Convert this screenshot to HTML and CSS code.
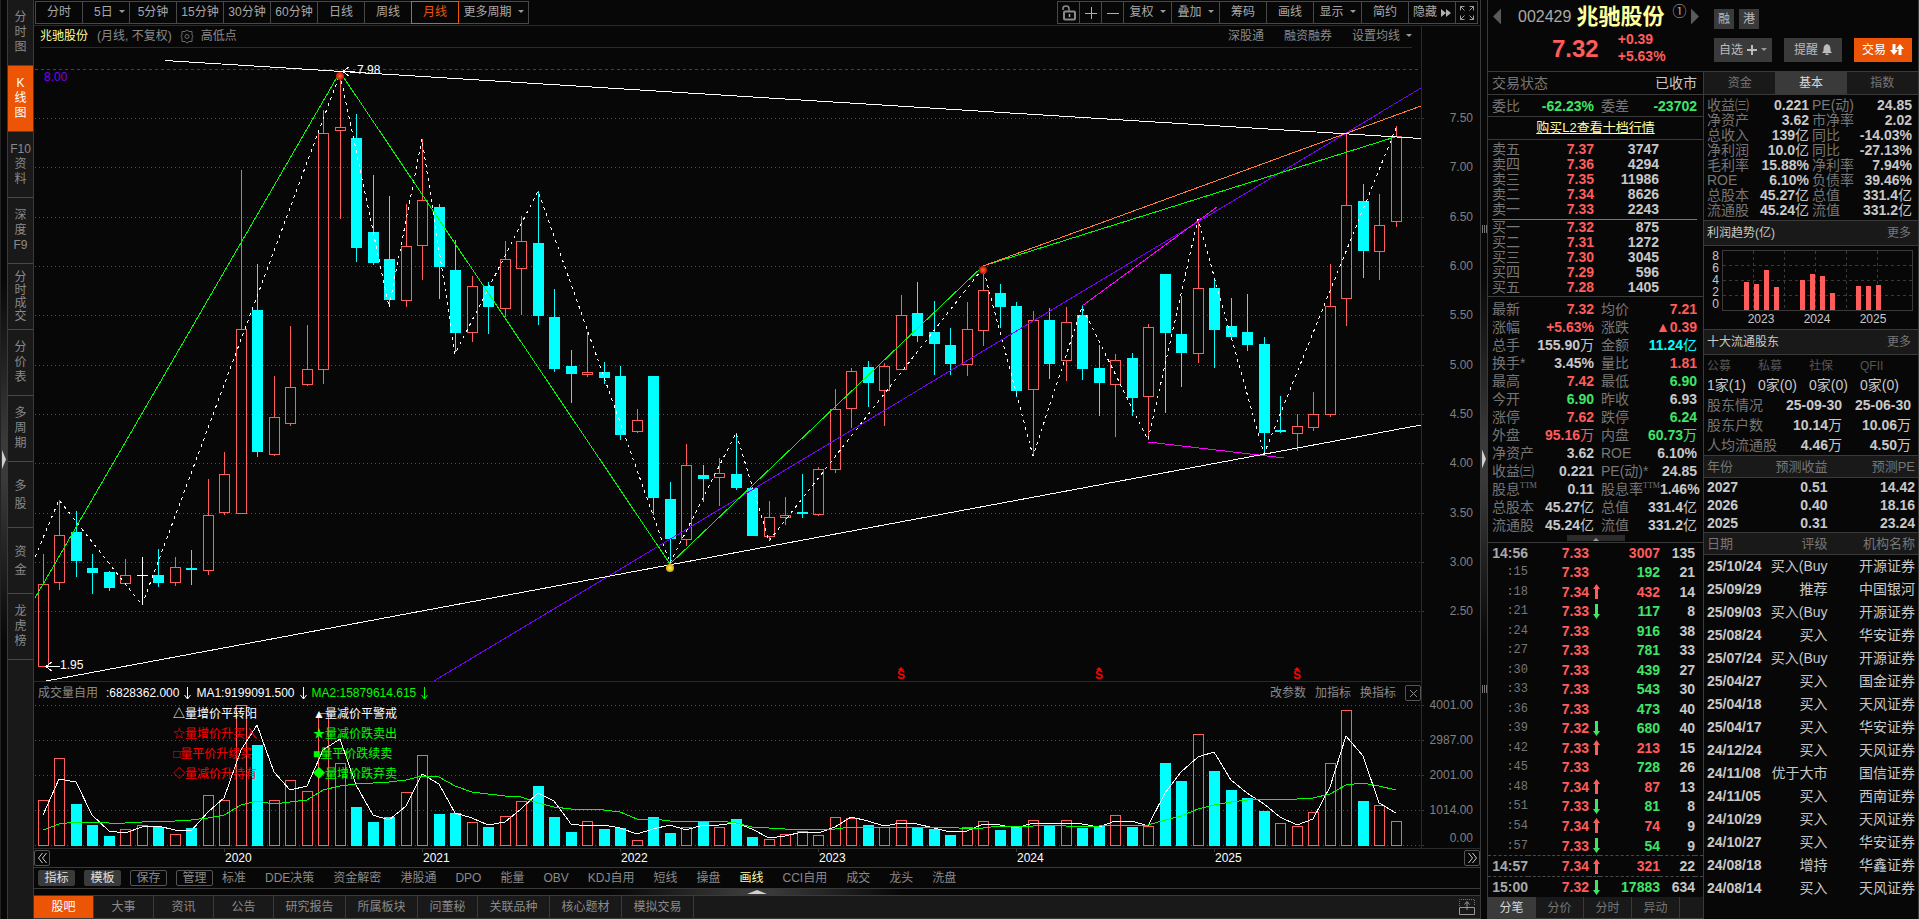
FILE: index.html
```html
<!doctype html>
<html lang="zh-CN">
  <head>
    <meta charset="UTF-8" />
    <meta name="viewport" content="width=device-width, initial-scale=1">
    <title>兆驰股份 002429</title>
    <link rel="stylesheet" href="styles.css">
    <script src="script.js" defer></script>
  </head>
  <body>
    <div class="strip strip-left"><button class="fold" aria-label="展开"></button></div>

    <nav class="side">
      <a href="#">分<br>时<br>图</a>
      <a href="#" class="on">K<br>线<br>图</a>
      <a href="#">F10<br>资<br>料</a>
      <a href="#">深<br>度<br>F9</a>
      <a href="#" class="tight">分<br>时<br>成<br>交</a>
      <a href="#">分<br>价<br>表</a>
      <a href="#">多<br>周<br>期</a>
      <a href="#" class="loose">多<br>股</a>
      <a href="#" class="loose">资<br>金</a>
      <a href="#">龙<br>虎<br>榜</a>
    </nav>

    <main class="chart">
      <div class="toolbar">
        <div class="group">
          <button>分时</button><button>&nbsp;&nbsp;5日<i class="caret"></i></button><button>5分钟</button><button>15分钟</button><button>30分钟</button><button>60分钟</button><button>日线</button><button>周线</button><button class="on">月线</button><button class="wide">更多周期<i class="caret"></i></button>
        </div>
        <div class="group">
          <button class="icon" aria-label="锁定"><svg width="16" height="18" viewBox="0 0 16 18"><path d="M2 6V4.500Q2 2 5 2Q8 2 8 4.500V7" fill="none" stroke="#8a8a8a" stroke-width="1.500"/><rect x="3" y="7.500" width="11" height="8" rx="1" fill="none" stroke="#8a8a8a" stroke-width="2"/><path d="M8.500 10v3" stroke="#aaa" stroke-width="1.500"/></svg></button>
          <button class="icon" aria-label="放大"><svg width="12" height="12"><path d="M0 6.500h12M6.500 0v12" stroke="#b0b0b0"/></svg></button>
          <button class="icon" aria-label="缩小"><svg width="12" height="12"><path d="M0 6.500h12" stroke="#b0b0b0"/></svg></button>
          <button class="menu">复权<i class="caret"></i></button><button class="menu">叠加<i class="caret"></i></button><button>筹码</button><button>画线</button><button class="menu">显示<i class="caret"></i></button><button>简约</button>
          <button>隐藏<svg class="ff" width="10" height="8"><path d="M0 0l5 4-5 4zM5 0l5 4-5 4z" fill="#b0b0b0"/></svg></button>
          <button class="icon" aria-label="全屏"><svg width="14" height="14" viewBox="0 0 14 14"><path d="M.5 4.500v-4h4M.5.5l4 4M9.500.5h4v4M13.500.5l-4 4M.5 9.500v4h4M.5 13.500l4-4M13.500 9.500v4h-4M13.500 13.500l-4-4" fill="none" stroke="#a0a0a0"/></svg></button>
        </div>
      </div>

      <div class="info">
        <div class="info-in">
          <b class="yellow">兆驰股份</b>
          <span class="period">(月线, 不复权)</span>
          <svg width="14" height="15" viewBox="0 0 14 15"><path d="M7 1l2 1.500h3v3.500l1 1.500-1 1.500v3.500h-3L7 14l-2-1.500H2V9L1 7.500 2 6V2.500h3z" fill="none" stroke="#6a6a6a"/><circle cx="7" cy="7.500" r="2" fill="none" stroke="#6a6a6a"/></svg>
          <span>高低点</span>
          <a href="#" class="push">深股通</a>
          <a href="#">融资融券</a>
          <a href="#">设置均线<i class="caret"></i></a>
        </div>
      </div>

      <svg id="price" viewBox="34 48 1446 633" preserveAspectRatio="none"></svg>

      <div class="vol-head">
        <span class="name">成交量自用</span>
        <span>:6828362.000</span>
        <svg width="7" height="13"><path d="M3.500 0v12M.5 8l3 4 3-4" fill="none" stroke="#fff"/></svg>
        <span>MA1:9199091.500</span>
        <svg width="7" height="13"><path d="M3.500 0v12M.5 8l3 4 3-4" fill="none" stroke="#fff"/></svg>
        <span class="lime">MA2:15879614.615</span>
        <svg width="7" height="13"><path d="M3.500 0v12M.5 8l3 4 3-4" fill="none" stroke="#0f0"/></svg>
        <a href="#" class="push">改参数</a><a href="#">加指标</a><a href="#">换指标</a>
        <button class="close" aria-label="关闭"><svg width="7" height="7"><path d="M0 0l7 7M7 0l-7 7" stroke="#888"/></svg></button>
      </div>
      <svg id="volume" viewBox="34 704 1446 144" preserveAspectRatio="none"></svg>

      <div class="years">
        <button aria-label="向前"><svg width="9" height="10"><path d="M4.500 0L.5 5l4 5M8.500 0l-4 5 4 5" fill="none" stroke="#ccc"/></svg></button>
        <svg id="years" viewBox="50 849 1414 18" preserveAspectRatio="none"></svg>
        <button aria-label="向后"><svg width="9" height="10"><path d="M.5 0l4 5-4 5M4.500 0l4 5-4 5" fill="none" stroke="#ccc"/></svg></button>
      </div>

      <div class="indicators">
        <button class="fill">指标</button><button class="fill">模板</button><button>保存</button><button>管理</button>
        <nav>
          <a href="#">标准</a><a href="#">DDE决策</a><a href="#">资金解密</a><a href="#">港股通</a><a href="#">DPO</a><a href="#">能量</a><a href="#">OBV</a><a href="#">KDJ自用</a><a href="#">短线</a><a href="#">操盘</a><a href="#" class="yellow">画线</a><a href="#">CCI自用</a><a href="#">成交</a><a href="#">龙头</a><a href="#">洗盘</a>
        </nav>
      </div>
      <div class="hsplit"><i></i></div>

      <nav class="bottom">
        <a href="#" class="on">股吧</a><a href="#">大事</a><a href="#">资讯</a><a href="#">公告</a><a href="#" class="w">研究报告</a><a href="#" class="w">所属板块</a><a href="#">问董秘</a><a href="#" class="w">关联品种</a><a href="#" class="w">核心题材</a><a href="#" class="w">模拟交易</a>
        <button aria-label="弹出"><svg width="16" height="17"><path d="M.5 8.500h15v7H.5z" fill="none" stroke="#999"/><path d="M8 11V3M5.500 5.500L8 2.500l2.500 3" fill="none" stroke="#999"/><path d="M.5 7V.5h15V7" fill="none" stroke="#777" stroke-dasharray="1 1"/></svg></button>
      </nav>
    </main>

    <div class="strip strip-mid"><i class="grip"></i><button class="fold" aria-label="收起"></button><i class="grip"></i></div>

    <aside class="quote">
      <header>
        <div class="title">
          <button class="prev" aria-label="上一只"></button>
          <span class="code">002429</span>
          <h1>兆驰股份</h1>
          <sup>①</sup>
          <button class="next" aria-label="下一只"></button>
        </div>
        <div class="now up">
          <strong>7.32</strong>
          <div><b>+0.39</b><b>+5.63%</b></div>
        </div>
        <div class="actions">
          <div><button class="tag">融</button><button class="tag">港</button></div>
          <div>
            <button>自选<svg width="10" height="10"><path d="M0 5h10M5 0v10" stroke="#bbb" stroke-width="2"/></svg><i class="caret"></i></button>
            <button>提醒<svg width="10" height="11"><path d="M5 0Q8.500 1 8.500 5V7L10 9H0L1.500 7V5Q1.500 1 5 0zM3.500 9.500h3V11h-3z" fill="#bbb"/></svg></button>
            <button class="trade">交易<svg width="14" height="11"><path d="M4 0v7M10 11V4" stroke="#fff" stroke-width="3"/><path d="M0 6h8l-4 5zM6 5h8L10 0z" fill="#fff"/></svg></button>
          </div>
        </div>
      </header>

      <section class="col left">
        <div class="status"><span>交易状态</span><span class="val">已收市</span></div>
        <dl class="pairs ratio">
          <div><dt>委比</dt><dd class="down-c">-62.23%</dd></div>
          <div><dt>委差</dt><dd class="down-c">-23702</dd></div>
        </dl>
        <p class="l2"><a href="#">购买L2查看十档行情</a></p>
        <table class="book" id="asks"></table>
        <table class="book bids" id="bids"></table>
        <dl class="pairs detail" id="detail"></dl>
        <button class="more" aria-label="收起明细"><i></i></button>
        <div class="tick-box"><table class="ticks" id="ticks"></table></div>
        <nav class="tabs"><a href="#" class="on">分笔</a><a href="#">分价</a><a href="#">分时</a><a href="#">异动</a></nav>
      </section>

      <section class="col right">
        <nav class="tabs top"><a href="#">资金</a><a href="#" class="on">基本</a><a href="#">指数</a></nav>
        <dl class="pairs basic" id="basic"></dl>
        <h2>利润趋势(亿)<a href="#">更多</a></h2>
        <svg id="profit" viewBox="1704 246 214 83" preserveAspectRatio="none"></svg>
        <h2>十大流通股东<a href="#">更多</a></h2>
        <table class="funds">
          <tr><th>公募</th><th>私募</th><th>社保</th><th>QFII</th></tr>
          <tr><td>1家(1)</td><td>0家(0)</td><td>0家(0)</td><td>0家(0)</td></tr>
        </table>
        <table class="holders">
          <tr><th>股东情况</th><td>25-09-30</td><td>25-06-30</td></tr>
          <tr><th>股东户数</th><td>10.14<s>万</s></td><td>10.06<s>万</s></td></tr>
          <tr><th>人均流通股</th><td>4.46<s>万</s></td><td>4.50<s>万</s></td></tr>
        </table>
        <table class="list forecast">
          <tr><th>年份</th><th>预测收益</th><th>预测PE</th></tr>
          <tr><td>2027</td><td>0.51</td><td>14.42</td></tr>
          <tr><td>2026</td><td>0.40</td><td>18.16</td></tr>
          <tr><td>2025</td><td>0.31</td><td>23.24</td></tr>
        </table>
        <table class="list ratings" id="ratings">
          <tr><th>日期</th><th>评级</th><th>机构名称</th></tr>
        </table>
      </section>
    </aside>
  </body>
</html>
```
FILE: styles.css
```css
* {
  box-sizing: border-box;
}
body {
  margin: 0;
  display: grid;
  grid-template-columns: 8px 26px minmax(0, 1fr) 8px 431px;
  height: 100vh;
  min-height: 919px;
  background: #070707;
  color: #8a8a8a;
  font: 12px/15px "Liberation Sans", "Noto Sans CJK SC", sans-serif;
}
a {
  color: inherit;
  text-decoration: none;
}
button {
  margin: 0;
  padding: 0;
  border: 0;
  background: none;
  color: inherit;
  font: inherit;
}
i {
  font-style: normal;
}
h1, h2, p, dl, dd {
  margin: 0;
}
table {
  border-collapse: collapse;
  table-layout: fixed;
  width: 100%;
}
th, td {
  padding: 0;
  font-weight: normal;
  text-align: right;
  white-space: nowrap;
}
.caret {
  display: inline-block;
  margin-left: 6px;
  border: 3px solid transparent;
  border-top-color: #999;
  border-bottom: 0;
  vertical-align: 3px;
}
.yellow { color: #ffffa0; }
.lime { color: #00ff00; }
.up { color: #ff5c5c; }
.down-c { color: #3fe567; }
.push { margin-left: auto; }

/* narrow bars with the fold arrow */
.strip {
  display: flex;
  flex-direction: column;
  align-items: center;
  border: solid #3a3a3a;
  border-width: 0 1px;
  background: linear-gradient(#070707 30%, #3a3a3a 48%, #3a3a3a 52%, #070707 70%);
}
.strip-left {
  justify-content: center;
  border-left-color: #222;
}
.strip-mid {
  padding: 225px 0 226px;
  justify-content: space-between;
}
.fold {
  width: 4px;
  height: 19px;
  background: #d0d0d0;
  clip-path: polygon(0 0, 100% 50%, 0 100%);
}
.grip {
  width: 5px;
  height: 8px;
  background: repeating-linear-gradient(90deg, #777 0 1px, transparent 1px 2px);
}

.side {
  background: #191919;
  border-right: 1px solid #3a3a3a;
}
.side a {
  display: flex;
  height: 66px;
  align-items: center;
  justify-content: center;
  border-bottom: 1px solid #484848;
  text-align: center;
}
.side .on {
  background: #eb5505;
  color: #fff;
}
.side .tight { line-height: 13px; }
.side .loose { line-height: 18px; }

.chart {
  display: flex;
  flex-direction: column;
  min-width: 0;
}
.toolbar {
  display: flex;
  justify-content: space-between;
  height: 26px;
  padding: 1px 3px 1px 1px;
  border-bottom: 1px solid #2a2a2a;
}
.group {
  display: flex;
  color: #a8a8a8;
}
.group button {
  width: 48px;
  height: 23px;
  margin-right: -1px;
  border: 1px solid #484848;
  white-space: nowrap;
}
.group button.icon { width: 23px; }
.group button.menu { width: 49px; }
.group button.wide { width: 71px; }
.group button svg { vertical-align: middle; }
.group .ff { margin-left: 4px; }
.group .on {
  position: relative;
  border-color: #eb5505;
  color: #eb5505;
}
.info {
  height: 22px;
  margin-right: 58px;
  border-right: 1px solid #2a2a2a;
}
.info-in {
  display: flex;
  align-items: center;
  gap: 5px;
  height: 22px;
  margin: 0 9px 0 6px;
  border-bottom: 1px solid #2a2a2a;
}
.info-in b { font-weight: normal; }
.info-in .period { margin-left: 4px; }
.info-in svg { margin: 0 2px 0 3px; }
.info-in a { margin-left: 15px; }
.info-in a.push { margin-left: auto; }
#price {
  flex: 1;
  min-height: 0;
  width: 100%;
}
.vol-head {
  display: flex;
  align-items: center;
  height: 23px;
  margin-right: 58px;
  padding-left: 4px;
  border: solid #2a2a2a;
  border-width: 1px 1px 0 0;
  color: #fff;
}
.vol-head .name {
  margin-right: 8px;
  color: #8a8a8a;
}
.vol-head a {
  margin-right: 9px;
  color: #8a8a8a;
}
.vol-head > svg { margin: 0 5px; }
.close {
  width: 16px;
  height: 16px;
  border: 1px solid #555;
  border-radius: 2px;
  line-height: 10px;
}
#volume {
  width: 100%;
  height: 144px;
  overflow: visible;
}
.years {
  display: flex;
  align-items: center;
  height: 19px;
  border-top: 1px solid #2a2a2a;
}
.years > svg {
  flex: 1;
  min-width: 0;
  height: 18px;
}
.years button {
  width: 16px;
  height: 16px;
  border: 1px solid #555;
  border-radius: 2px;
  line-height: 10px;
}
svg text {
  font-size: 12px;
}
.indicators {
  display: flex;
  align-items: center;
  gap: 9px;
  height: 21px;
  padding-left: 4px;
  border-top: 1px solid #3a3a3a;
}
.indicators button {
  width: 37px;
  height: 16px;
  border: 1px solid #555;
  border-radius: 2px;
  line-height: 13px;
}
.indicators .fill {
  background: #3a3a3a;
  border-color: #3a3a3a;
  color: #e0e0e0;
}
.indicators nav {
  display: flex;
  gap: 19px;
}
.hsplit {
  display: flex;
  justify-content: center;
  align-items: center;
  height: 7px;
  border-top: 1px solid #3a3a3a;
  background: linear-gradient(90deg, #070707 40%, #3a3a3a 49%, #3a3a3a 51%, #070707 60%);
}
.hsplit i {
  border: 10px solid transparent;
  border-width: 0 10px 4px;
  border-bottom-color: #d0d0d0;
}
.bottom {
  display: flex;
  height: 24px;
  border: solid #3a3a3a;
  border-width: 1px 0;
  background: #191919;
}
.bottom a {
  width: 60px;
  border-right: 1px solid #3a3a3a;
  line-height: 23px;
  text-align: center;
}
.bottom a.w { width: 72px; }
.bottom .on {
  background: #eb5505;
  color: #fff;
}
.bottom button {
  margin: 3px 5px 0 auto;
}

/* quote panel */
.quote {
  display: grid;
  grid-template-columns: 216px 214px;
  grid-template-rows: 72px minmax(0, 1fr);
  border-right: 1px solid #3a3a3a;
  font-size: 14px;
  color: #767676;
}
.quote header {
  grid-column: 1 / 3;
  display: grid;
  grid-template-columns: 216px 214px;
  grid-template-rows: 33px 38px;
  border-bottom: 1px solid #3a3a3a;
}
.title {
  display: flex;
  align-items: center;
  padding: 0 5px;
  color: #aaa;
}
.prev, .next {
  width: 8px;
  height: 16px;
  background: #5a5a5a;
  clip-path: polygon(100% 0, 0 50%, 100% 100%);
}
.next {
  margin-left: auto;
  clip-path: polygon(0 0, 100% 50%, 0 100%);
}
.code {
  margin: 0 5px 0 17px;
  font-size: 16px;
}
.title h1 {
  color: #ffffa0;
  font-size: 22px;
  line-height: 30px;
}
.title sup {
  align-self: flex-start;
  margin: 4px 0 0 8px;
  font-size: 14px;
}
.now {
  grid-row: 2;
  display: flex;
  align-items: center;
  gap: 19px;
  padding: 0 0 8px 64px;
}
.now strong {
  font-size: 24px;
}
.now div {
  line-height: 17px;
}
.now b {
  display: block;
}
.actions {
  grid-column: 2;
  grid-row: 1 / 3;
  padding: 9px 6px 0 10px;
  color: #bbb;
  font-size: 12px;
}
.actions div {
  display: flex;
  gap: 5px;
}
.actions div + div {
  justify-content: space-between;
  margin-top: 9px;
}
.actions button {
  width: 58px;
  height: 24px;
  background: #3a3a3a;
}
.actions svg {
  margin-left: 4px;
  vertical-align: -1px;
}
.actions .caret { margin-left: 4px; }
.actions .tag {
  width: 20px;
  height: 20px;
}
.actions .trade {
  background: #eb5505;
  color: #fff;
}

.col {
  display: flex;
  flex-direction: column;
  min-width: 0;
}
.left {
  border-right: 1px solid #3a3a3a;
}
.status {
  display: flex;
  justify-content: space-between;
  height: 23px;
  padding: 0 6px 0 4px;
  border-bottom: 1px solid #3a3a3a;
  line-height: 22px;
}
.val { color: #c8c8c8; }
.pairs {
  display: grid;
  grid-template-columns: 102px 96px;
  column-gap: 7px;
  padding-left: 4px;
  line-height: 18px;
}
.pairs div {
  display: flex;
  justify-content: space-between;
  white-space: nowrap;
}
dd {
  color: #c8c8c8;
  font-weight: bold;
}
dd.up { color: #ff5c5c; }
dd.down-c { color: #3fe567; }
dd.cyan { color: #00ffff; }
s {
  font-weight: normal;
  text-decoration: none;
}
dt sup {
  font: 8px/8px "Liberation Serif", serif;
  vertical-align: 6px;
}
.ratio {
  height: 22px;
  border-bottom: 1px solid #3a3a3a;
  line-height: 22px;
}
.l2 {
  height: 23px;
  border-bottom: 1px solid #3a3a3a;
  color: #ffffa0;
  font-size: 13px;
  line-height: 22px;
  text-align: center;
}
.l2 a { text-decoration: underline; }
.book {
  width: 205px;
  margin: 2px 5px 0 4px;
  line-height: 15px;
}
.book th {
  width: 37px;
  text-align: left;
}
.book td {
  width: 65px;
  font-weight: bold;
}
.book td:nth-child(2) { color: #ff5c5c; }
.book td:nth-child(3) { color: #c8c8c8; }
.book td:last-child { width: 38px; }
.bids {
  border-top: 1px solid #777;
}
.detail {
  margin-top: 1px;
  padding-top: 3px;
  border-top: 1px solid #3a3a3a;
}
.more {
  align-self: center;
  width: 58px;
  height: 6px;
  margin: 1px 0;
  background: #2c2c2c;
  line-height: 0;
}
.more i {
  display: inline-block;
  border: 3px solid transparent;
  border-top: 0;
  border-bottom-color: #999;
}
.tick-box {
  flex: 1;
  min-height: 0;
  border-top: 1px solid #3a3a3a;
}
.ticks {
  height: 100%;
  line-height: 16px;
}
.ticks td {
  font-weight: bold;
}
.ticks td:nth-child(1) { width: 40px; color: #a8a8a8; }
.ticks td.sec { color: #767676; font: 12px "Liberation Mono", monospace; }
.ticks td:nth-child(2) { width: 61px; }
.ticks td:nth-child(3) { width: 11px; }
.ticks td:nth-child(4) { width: 60px; }
.ticks td:nth-child(5) { width: 35px; color: #c8c8c8; }
.ticks td:nth-child(6) { width: 8px; }
.ticks svg { display: block; margin-left: auto; }
.ticks .minute { border-top: 1px dashed #484848; }
.tabs {
  display: flex;
  height: 22px;
  background: #191919;
  border-bottom: 1px solid #3a3a3a;
  font-size: 12px;
  line-height: 22px;
  text-align: center;
}
.tabs a {
  width: 48px;
  border-right: 1px solid #3a3a3a;
}
.tabs .on {
  background: #3a3a3a;
  color: #d8d8d8;
}
.tabs.top { height: 23px; }
.tabs.top a {
  flex: 1;
  border: 0;
}

.basic {
  grid-template-columns: 102px 100px;
  column-gap: 3px;
  padding: 3px 0 2px 3px;
  line-height: 15px;
}
.right h2 {
  display: flex;
  justify-content: space-between;
  height: 26px;
  padding: 0 7px 0 3px;
  border: solid #3a3a3a;
  border-width: 1px 0;
  background: #191919;
  color: #c8c8c8;
  font-size: 12px;
  font-weight: normal;
  line-height: 24px;
}
.right h2 a { color: #767676; }
#profit {
  width: 100%;
  height: 83px;
}
.funds th, .funds td, .holders th {
  text-align: left;
}
.funds {
  width: 204px;
  margin: 2px 0 0 3px;
  line-height: 19px;
}
.funds th {
  color: #555;
  font-size: 12px;
}
.funds td { color: #c8c8c8; }
.holders {
  width: 204px;
  margin: 0 0 0 3px;
  line-height: 20px;
}
.holders td {
  width: 69px;
  color: #c8c8c8;
  font-weight: bold;
}
.list td {
  width: 85px;
  padding-right: 3px;
  color: #c8c8c8;
}
.list th {
  width: 87px;
  height: 22px;
  padding-right: 3px;
  background: #191919;
  border: solid #3a3a3a;
  border-width: 1px 0;
  font-size: 13px;
  line-height: 20px;
}
.list td:first-child, .list th:first-child {
  width: 64px;
  padding-left: 3px;
  text-align: left;
}
.list th:nth-child(2) { width: 62px; }
.forecast td {
  font-weight: bold;
  line-height: 18px;
}
.ratings td {
  line-height: 23px;
}
.ratings td:first-child { font-weight: bold; }
```
FILE: script.js
```js
(function () {
'use strict';

var RED = '#ff5c5c', CYAN = '#00ffff', LIME = '#00ff00', STEP = 16.5;

// high, body top, body bottom, low, kind
var candles = [
  [554,584,667,667,'r'],[500,535,583,590,'r'],[511,532,561,577,'c'],[554,568,573,594,'c'],[571,572,588,591,'c'],
  [559,575,584,585,'r'],[557,575,576,605,'w'],[549,575,583,587,'c'],[557,567,583,586,'r'],[550,568,570,585,'c'],
  [479,515,571,575,'r'],[452,474,513,515,'r'],[170,329,514,514,'r'],[264,310,452,457,'c'],[376,417,455,456,'r'],
  [326,387,424,426,'r'],[325,369,385,386,'r'],[110,133,370,384,'r'],[75,127,131,219,'r'],[114,138,248,262,'c'],
  [175,232,263,265,'c'],[196,259,300,306,'c'],[204,246,301,307,'r'],[139,200,246,280,'r'],[204,207,267,299,'c'],
  [240,270,333,352,'c'],[276,286,333,342,'r'],[282,286,307,334,'c'],[241,259,309,317,'r'],[216,241,269,315,'r'],
  [191,243,316,325,'c'],[289,317,369,372,'c'],[350,366,374,403,'c'],[332,372,375,377,'r'],[362,372,378,384,'c'],
  [366,376,435,440,'c'],[409,420,432,433,'r'],[376,376,498,515,'c'],[482,499,539,563,'c'],[444,465,540,546,'r'],
  [465,475,479,502,'c'],[458,473,478,506,'r'],[433,474,488,490,'c'],[487,488,536,536,'c'],[501,517,537,541,'r'],
  [497,515,518,525,'r'],[474,512,514,518,'c'],[467,469,515,516,'r'],[389,409,470,473,'r'],[368,371,409,428,'r'],
  [361,367,383,407,'c'],[363,366,391,426,'r'],[295,315,370,370,'r'],[282,313,336,342,'c'],[301,332,344,375,'c'],
  [328,345,364,375,'c'],[302,329,365,376,'r'],[272,290,331,346,'r'],[284,293,307,328,'c'],[302,306,391,397,'c'],
  [311,320,390,456,'r'],[308,320,364,379,'c'],[307,322,361,381,'r'],[306,315,369,380,'c'],[345,368,383,416,'c'],
  [354,360,385,437,'r'],[353,358,398,416,'c'],[324,327,397,440,'r'],[274,274,333,413,'c'],[296,334,353,387,'c'],
  [220,288,354,363,'r'],[279,288,330,368,'c'],[298,326,337,340,'c'],[294,332,345,351,'c'],[337,344,433,454,'c'],
  [396,430,432,433,'c'],[414,426,434,451,'r'],[392,414,428,431,'r'],[264,306,415,417,'r'],[133,205,299,326,'r'],
  [184,201,251,278,'c'],[194,225,252,280,'r'],[126,136,222,227,'r']
];
var volTop = [
  800,758,804,825,836,829,825,827,834,828,795,800,705,745,800,780,791,713,763,807,822,817,792,755,814,813,822,827,
  816,801,786,817,832,821,829,828,840,817,833,827,822,827,819,837,839,834,831,835,817,818,825,827,820,827,829,835,
  827,821,830,826,820,825,820,828,826,815,827,826,763,781,734,771,790,798,811,823,826,812,763,710,801,805,821
];
// ten months to a string
var volKind = ['rrcccrrcrc', 'rrrcrrrrrc', 'ccrrccrcrr', 'cccrccrccr', 'crccrrrrrr', 'crrcccrrcc', 'rcrccrcrcc', 'rccccrrrrr', 'crr'].join('');
var ma1 = [
  815,779,782,815,831,833,827,826,830,831,812,798,750,725,772,790,786,750,739,785,815,820,806,774,784,813,818,825,
  822,809,793,801,824,826,825,828,834,829,825,830,825,825,823,829,838,836,832,833,827,817,821,826,823,824,828,832,
  831,824,825,828,823,823,823,824,827,821,821,826,793,772,757,752,780,793,804,817,825,819,787,736,756,803,813
];
var ma2 = [
  830,824,822,822,823,823,822,821,821,820,818,815,805,801,804,802,800,790,786,784,783,782,780,776,777,786,792,794,
  796,797,803,807,809,809,810,812,819,819,821,821,821,821,823,827,828,829,829,830,829,827,828,827,827,827,827,827,
  829,828,826,826,826,825,826,826,826,825,825,825,820,816,809,805,802,800,799,799,799,798,794,785,783,786,790
];

function xAt(i) {
  return Math.floor(43 + STEP * i);
}
function rect(x, y, w, h, color) {
  return '<rect x="' + x + '" y="' + y + '" width="' + w + '" height="' + h + '" fill="' + color + '"/>';
}
function box(x, top, bottom) {
  return '<rect x="' + (x - 4.5) + '" y="' + (top + 0.5) + '" width="10" height="' + Math.max(bottom - top - 1, 1) +
    '" fill="none" stroke="' + RED + '"/>';
}
function line(points, color, extra) {
  return '<polyline points="' + points + '" fill="none" stroke="' + color + '" ' + (extra || '') + '/>';
}
function text(x, y, s, color, anchor) {
  return '<text x="' + x + '" y="' + y + '" fill="' + color + '" text-anchor="' + (anchor || 'start') + '">' + s + '</text>';
}
function put(id, html) {
  document.getElementById(id).innerHTML += html;
}

function drawPrice() {
  var s = '<defs><radialGradient id="r"><stop stop-color="#ff6a3a"/><stop offset="1" stop-color="#c01000"/></radialGradient>' +
    '<radialGradient id="y"><stop stop-color="#fff060"/><stop offset="1" stop-color="#d0a800"/></radialGradient></defs>' +
    '<g shape-rendering="crispEdges">';
  [118,167,217,266,315,365,414,463,513,562,611].forEach(function (y, n) {
    s += line('35,' + (y + 0.5) + ' 1420,' + (y + 0.5), '#505050', 'stroke-dasharray="1 3"');
    s += rect(1422, y, 2, 1, '#3a3a3a');
    s += text(1473, y + 4, (7.5 - n * 0.5).toFixed(2), '#808080', 'end');
  });
  s += rect(1421, 48, 1, 633, '#2a2a2a');
  candles.forEach(function (c, i) {
    var x = xAt(i);
    if (c[4] === 'r') {
      s += rect(x, c[0], 1, c[1] - c[0], RED) + rect(x, c[2], 1, c[3] - c[2], RED) + box(x, c[1], c[2]);
    } else {
      var color = c[4] === 'w' ? '#ffffff' : CYAN;
      s += rect(x, c[0], 1, c[3] - c[0], color) + rect(x - 5, c[1], 11, c[2] - c[1], color);
    }
  });
  s += line('35,557 59,500 142,605 340,74 389,307 422,139 455,354 538,191 670,563 736,433 769,541 983,268 1033,456 1082,307 1148,440 1198,219 1264,454 1396,128',
    '#ffffff', 'stroke-dasharray="3 4"');
  s += line('35,69.5 1419,69.5', '#7a00ff', 'stroke-dasharray="3 3"');
  s += line('434,681 1421,88', '#7a00ff');
  s += line('1082,306 1217,207', '#ff00ff') + line('1148,442 1284,458', '#ff00ff');
  s += line('35,598 340,72 670,564 983,266 1395,137', LIME);
  s += line('983,266 1421,106', '#ff7f3f');
  s += line('165,60.5 1421,138.5', '#ffffff') + line('46,681 1421,425', '#ffffff');
  s += line('60,666.5 46,666.5', '#ffffff') + line('52,662 46,666.5 52,671', '#ffffff');
  s += line('355,71.5 343,71.5', '#ffffff') + line('349,67 343,71.5 349,76', '#ffffff');
  s += '</g>';
  s += '<circle cx="340" cy="76" r="4" fill="url(#r)"/><circle cx="983" cy="270" r="4" fill="url(#r)"/>';
  s += '<circle cx="670" cy="568" r="4" fill="url(#y)"/>';
  s += text(357, 74, '7.98', '#ffffff') + text(60, 669, '1.95', '#ffffff') + text(44, 81, '8.00', '#7a00ff');
  [901, 1099, 1297].forEach(function (x) {
    s += '<text x="' + x + '" y="679" fill="#ff0000" font-weight="bold" text-anchor="middle">S</text>';
    s += '<path d="M' + (x - 3) + ' 670l3-3 3 3z" fill="#ff0000"/>';
  });
  put('price', s);
}

function drawVolume() {
  var s = '<g shape-rendering="crispEdges">';
  [705,740,775,810,845].forEach(function (y, n) {
    s += line('35,' + (y + 0.5) + ' 1420,' + (y + 0.5), '#505050', 'stroke-dasharray="1 3"');
    s += rect(1422, y, 2, 1, '#3a3a3a');
    s += text(1473, n === 4 ? 842 : y + 4, ['4001.00', '2987.00', '2001.00', '1014.00', '0.00'][n], '#808080', 'end');
  });
  s += rect(1421, 704, 1, 144, '#2a2a2a');
  volTop.forEach(function (y, i) {
    s += volKind[i] === 'r' ? box(xAt(i), y, 846) : rect(xAt(i) - 5, y, 11, 846 - y, CYAN);
  });
  function path(list) {
    return list.map(function (y, i) { return xAt(i) + ',' + y; }).join(' ');
  }
  s += line(path(ma1), '#ffffff') + line(path(ma2), LIME) + '</g>';
  s += text(173, 718, '△量增价平转阳', '#ffffff') + text(313, 718, '▲量减价平警戒', '#ffffff');
  s += text(173, 738, '☆量增价升买入', '#ff0000') + text(313, 738, '★量减价跌卖出', LIME);
  s += text(173, 758, '□量平价升续买', '#ff0000') + text(313, 758, '■量平价跌续卖', LIME);
  s += text(173, 778, '◇量减价升持有', '#ff0000') + text(313, 778, '◆量增价跌弃卖', LIME);
  put('volume', s);

  s = '';
  for (var k = 0; k < 6; k++) {
    s += rect(xAt(11 + 12 * k), 849, 1, 3, '#3a3a3a') + text(xAt(11 + 12 * k) + 1, 862, 2020 + k, '#ffffff');
  }
  put('years', s);
}

function drawProfit() {
  var s = '<g shape-rendering="crispEdges"><rect x="1722.5" y="250.5" width="190" height="60" fill="none" stroke="#3a3a3a"/>';
  [265.5, 280.5, 295.5].forEach(function (y) {
    s += line('1723,' + y + ' 1912,' + y, '#3a3a3a', 'stroke-dasharray="3 3"');
  });
  [1753.5, 1784.5, 1815.5, 1846.5, 1877.5].forEach(function (x) {
    s += line(x + ',251 ' + x + ',310', '#3a3a3a', 'stroke-dasharray="3 3"');
  });
  [[1744,282],[1754,284],[1764,270],[1774,287],[1800,280],[1810,274],[1820,276],[1830,293],[1856,286],[1866,286],[1876,285]].forEach(function (b) {
    s += rect(b[0], b[1], 5, 310 - b[1], RED);
  });
  s += '</g>';
  [8, 6, 4, 2, 0].forEach(function (v, n) {
    s += text(1719, 260 + 12 * n, v, '#c8c8c8', 'end');
  });
  [2023, 2024, 2025].forEach(function (v, n) {
    s += text(1761 + 56 * n, 323, v, '#c8c8c8', 'middle');
  });
  put('profit', s);
}

function unit(v) {
  return v.replace(/[万亿]/, '<s>$&</s>');
}
function pairs(id, rows) {
  put(id, rows.map(function (r) {
    return '<div><dt>' + r[0] + '</dt><dd class="' + (r[2] || '') + '">' + unit(r[1]) + '</dd></div>';
  }).join(''));
}
function book(id, rows) {
  put(id, rows.map(function (r) {
    return '<tr><th>' + r[0] + '</th><td>' + r[1] + '</td><td>' + r[2] + '</td><td></td></tr>';
  }).join(''));
}

drawPrice();
drawVolume();
drawProfit();

book('asks', [['卖五','7.37',3747],['卖四','7.36',4294],['卖三','7.35',11986],['卖二','7.34',8626],['卖一','7.33',2243]]);
book('bids', [['买一','7.32',875],['买二','7.31',1272],['买三','7.30',3045],['买四','7.29',596],['买五','7.28',1405]]);

pairs('detail', [
  ['最新','7.32','up'],['均价','7.21','up'],
  ['涨幅','+5.63%','up'],['涨跌','▲0.39','up'],
  ['总手','155.90万'],['金额','11.24亿','cyan'],
  ['换手*','3.45%'],['量比','1.81','up'],
  ['最高','7.42','up'],['最低','6.90','down-c'],
  ['今开','6.90','down-c'],['昨收','6.93'],
  ['涨停','7.62','up'],['跌停','6.24','down-c'],
  ['外盘','95.16万','up'],['内盘','60.73万','down-c'],
  ['净资产','3.62'],['ROE','6.10%'],
  ['收益㈢','0.221'],['PE(动)*','24.85'],
  ['股息<sup>TTM</sup>','0.11'],['股息率<sup>TTM</sup>','1.46%'],
  ['总股本','45.27亿'],['总值','331.4亿'],
  ['流通股','45.24亿'],['流值','331.2亿']
]);
pairs('basic', [
  ['收益㈢','0.221'],['PE(动)','24.85'],
  ['净资产','3.62'],['市净率','2.02'],
  ['总收入','139亿'],['同比','-14.03%'],
  ['净利润','10.0亿'],['同比','-27.13%'],
  ['毛利率','15.88%'],['净利率','7.94%'],
  ['ROE','6.10%'],['负债率','39.46%'],
  ['总股本','45.27亿'],['总值','331.4亿'],
  ['流通股','45.24亿'],['流值','331.2亿']
]);

// time, price, arrow, volume, up/down, count
put('ticks', [
  ['14:56','7.33','',3007,'u',135],[':15','7.33','',192,'d',21],[':18','7.34','u',432,'u',14],[':21','7.33','d',117,'d',8],
  [':24','7.33','',916,'d',38],[':27','7.33','',781,'d',33],[':30','7.33','',439,'d',27],[':33','7.33','',543,'d',30],
  [':36','7.33','',473,'d',40],[':39','7.32','d',680,'d',40],[':42','7.33','u',213,'u',15],[':45','7.33','',728,'d',26],
  [':48','7.34','u',87,'u',13],[':51','7.33','d',81,'d',8],[':54','7.34','u',74,'u',9],[':57','7.33','d',54,'d',9],
  ['14:57','7.34','u',321,'u',22],['15:00','7.32','d',17883,'d',634]
].map(function (t, i) {
  var arrow = {
    u: '<svg width="7" height="15"><path d="M2 15V5H0L3.500 0 7 5H5V15z" fill="#ff5c5c"/></svg>',
    d: '<svg width="7" height="15"><path d="M2 0V10H0L3.500 15 7 10H5V0z" fill="#3fe567"/></svg>'
  }[t[2]] || '';
  return '<tr class="' + (i > 15 ? 'minute' : '') + '"><td class="' + (t[0][0] === ':' ? 'sec' : '') + '">' + t[0] +
    '</td><td class="up">' + t[1] + '</td><td>' + arrow + '</td><td class="' + (t[4] === 'u' ? 'up' : 'down-c') + '">' +
    t[3] + '</td><td>' + t[5] + '</td><td></td></tr>';
}).join(''));

put('ratings', [
  ['25/10/24','买入(Buy','开源证券'],['25/09/29','推荐','中国银河'],['25/09/03','买入(Buy','开源证券'],
  ['25/08/24','买入','华安证券'],['25/07/24','买入(Buy','开源证券'],['25/04/27','买入','国金证券'],
  ['25/04/18','买入','天风证券'],['25/04/17','买入','华安证券'],['24/12/24','买入','天风证券'],
  ['24/11/08','优于大市','国信证券'],['24/11/05','买入','西南证券'],['24/10/29','买入','天风证券'],
  ['24/10/27','买入','华安证券'],['24/08/18','增持','华鑫证券'],['24/08/14','买入','天风证券']
].map(function (r) {
  return '<tr><td>' + r[0] + '</td><td>' + r[1] + '</td><td>' + r[2] + '</td></tr>';
}).join(''));

})();
```
